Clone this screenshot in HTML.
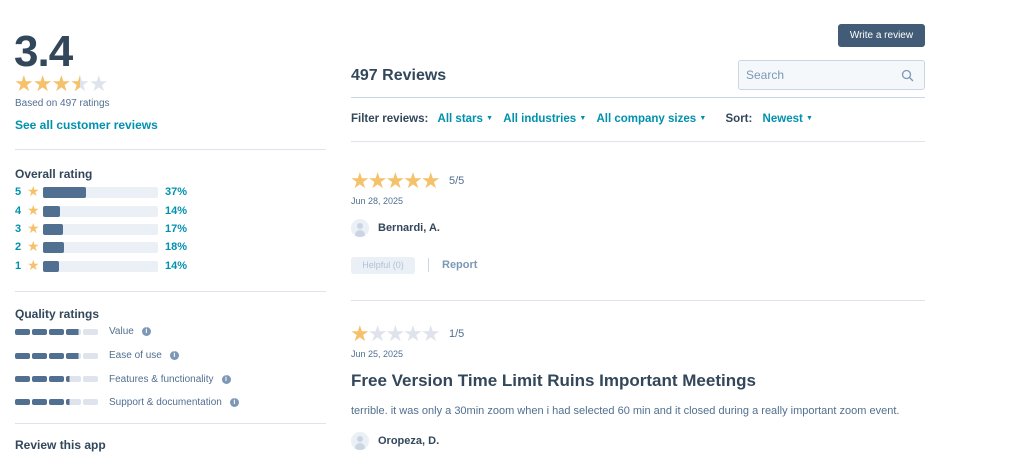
<!DOCTYPE html>
<html><head><meta charset="utf-8"><style>
*{margin:0;padding:0;box-sizing:border-box}
body{width:1024px;height:447px;overflow:hidden;background:#fff;font-family:"Liberation Sans",sans-serif;color:#33475b;position:relative}
.a{position:absolute;white-space:nowrap}
.b{font-weight:bold}
.t{color:#0091ae}
.hr{position:absolute;height:1px;background:#dfe3eb}
.st{color:#f5c26b}
.sg{color:#dfe3eb}
.bar{position:absolute;left:43px;width:115px;height:11px;background:#eaf0f6;border-radius:2px}
.bar i{display:block;height:11px;background:#516f90;border-radius:2px}
.q{position:absolute;left:15px;display:flex;gap:2px}
.q i{display:block;width:15px;height:6px;background:#dfe3eb;border-radius:2px}
.q i.f{background:#516f90}
.info{display:inline-block;width:9px;height:9px;border-radius:50%;background:#7c98b6;color:#fff;font-size:7px;text-align:center;line-height:9px;font-weight:bold;margin-left:8px;vertical-align:1px}
.av{position:absolute;width:18px;height:18px;border-radius:50%;background:#eaf0f6;overflow:hidden}
.av:before{content:"";position:absolute;left:6px;top:4px;width:6px;height:6px;border-radius:50%;background:#cbd6e2}
.av:after{content:"";position:absolute;left:4px;top:11px;width:10px;height:8px;border-radius:5px 5px 0 0;background:#cbd6e2}
.car{font-size:7px;vertical-align:2px}
</style></head><body>
<div class="a b" style="left:14px;top:27px;font-size:44px;letter-spacing:-1px">3.4</div>
<div class="a" style="left:14px;top:71px;font-size:22px;letter-spacing:-1px"><span class="st">★★★</span><span style="position:relative;color:#dfe3eb">★<span style="position:absolute;left:0;top:0;width:50%;overflow:hidden;color:#f5c26b">★</span></span><span class="sg">★</span></div>
<div class="a" style="left:15px;top:98px;font-size:10px;color:#516f90">Based on 497 ratings</div>
<div class="a b t" style="left:15px;top:118px;font-size:12px">See all customer reviews</div>
<div class="hr" style="left:15px;top:149px;width:311px"></div>
<div class="a b" style="left:15px;top:167px;font-size:12px">Overall rating</div>
<div class="a b t" style="left:15px;top:186px;font-size:11px">5</div><div class="a st" style="left:27px;top:183px;font-size:14px">★</div><div class="bar" style="top:187px"><i style="width:43px"></i></div><div class="a b t" style="left:165px;top:186px;font-size:11px">37%</div>
<div class="a b t" style="left:15px;top:205px;font-size:11px">4</div><div class="a st" style="left:27px;top:202px;font-size:14px">★</div><div class="bar" style="top:206px"><i style="width:17px"></i></div><div class="a b t" style="left:165px;top:205px;font-size:11px">14%</div>
<div class="a b t" style="left:15px;top:223px;font-size:11px">3</div><div class="a st" style="left:27px;top:220px;font-size:14px">★</div><div class="bar" style="top:224px"><i style="width:20px"></i></div><div class="a b t" style="left:165px;top:223px;font-size:11px">17%</div>
<div class="a b t" style="left:15px;top:241px;font-size:11px">2</div><div class="a st" style="left:27px;top:238px;font-size:14px">★</div><div class="bar" style="top:242px"><i style="width:21px"></i></div><div class="a b t" style="left:165px;top:241px;font-size:11px">18%</div>
<div class="a b t" style="left:15px;top:260px;font-size:11px">1</div><div class="a st" style="left:27px;top:257px;font-size:14px">★</div><div class="bar" style="top:261px"><i style="width:16px"></i></div><div class="a b t" style="left:165px;top:260px;font-size:11px">14%</div>
<div class="hr" style="left:15px;top:291px;width:311px"></div>
<div class="a b" style="left:15px;top:307px;font-size:12px">Quality ratings</div>
<div class="q" style="top:329px"><i class="f"></i><i class="f"></i><i class="f"></i><i class="f" style="background:linear-gradient(90deg,#516f90 85%,#dfe3eb 85%)"></i><i></i></div>
<div class="a" style="left:109px;top:326px;font-size:10px;color:#516f90">Value<span class="info">i</span></div>
<div class="q" style="top:353px"><i class="f"></i><i class="f"></i><i class="f"></i><i class="f" style="background:linear-gradient(90deg,#516f90 85%,#dfe3eb 85%)"></i><i></i></div>
<div class="a" style="left:109px;top:350px;font-size:10px;color:#516f90">Ease of use<span class="info">i</span></div>
<div class="q" style="top:376px"><i class="f"></i><i class="f"></i><i class="f"></i><i style="background:linear-gradient(90deg,#516f90 25%,#dfe3eb 25%)"></i><i></i></div>
<div class="a" style="left:109px;top:374px;font-size:10px;color:#516f90">Features &amp; functionality<span class="info">i</span></div>
<div class="q" style="top:399px"><i class="f"></i><i class="f"></i><i class="f"></i><i style="background:linear-gradient(90deg,#516f90 25%,#dfe3eb 25%)"></i><i></i></div>
<div class="a" style="left:109px;top:397px;font-size:10px;color:#516f90">Support &amp; documentation<span class="info">i</span></div>
<div class="hr" style="left:15px;top:423px;width:311px"></div>
<div class="a b" style="left:15px;top:438px;font-size:12px">Review this app</div>

<div class="a" style="left:838px;top:24px;width:87px;height:23px;background:#425b76;border-radius:3px;color:#fff;font-size:10px;text-align:center;line-height:23px">Write a review</div>
<div class="a b" style="left:351px;top:67px;font-size:16px">497 Reviews</div>
<div class="a" style="left:738px;top:60px;width:187px;height:30px;background:#f5f8fa;border:1px solid #cbd6e2;border-radius:3px"><span style="position:absolute;left:7px;top:7px;font-size:12px;color:#7c98b6">Search</span>
<svg style="position:absolute;left:162px;top:8px" width="13" height="13" viewBox="0 0 13 13"><circle cx="5.5" cy="5.5" r="4" fill="none" stroke="#7c98b6" stroke-width="1.3"/><path d="M8.5 8.5L12 12" stroke="#7c98b6" stroke-width="1.3"/></svg></div>
<div class="hr" style="left:351px;top:97px;width:574px;background:#cbd6e2"></div>
<div class="a" style="left:351px;top:113px;font-size:11.5px"><b>Filter reviews:</b>
<b class="t" style="margin-left:6px">All stars <span class="car">▼</span></b>
<b class="t" style="margin-left:7px">All industries <span class="car">▼</span></b>
<b class="t" style="margin-left:7px">All company sizes <span class="car">▼</span></b>
<b style="margin-left:16px">Sort:</b>
<b class="t" style="margin-left:7px">Newest <span class="car">▼</span></b></div>
<div class="hr" style="left:351px;top:141px;width:574px"></div>

<div class="a st" style="left:350px;top:168px;font-size:22px;letter-spacing:-2px">★★★★★</div>
<div class="a" style="left:449px;top:175px;font-size:11px;color:#516f90">5/5</div>
<div class="a" style="left:351px;top:196px;font-size:9px;color:#516f90">Jun 28, 2025</div>
<div class="av" style="left:351px;top:219px"></div>
<div class="a b" style="left:378px;top:222px;font-size:11px">Bernardi, A.</div>
<div class="a" style="left:351px;top:257px;width:64px;height:17px;background:#eaf0f6;border-radius:3px;font-size:9px;color:#b0c1d4;text-align:center;line-height:17px">Helpful (0)</div>
<div class="a" style="left:428px;top:258px;width:1px;height:14px;background:#cbd6e2"></div>
<div class="a b" style="left:442px;top:259px;font-size:11px;color:#7c98b6">Report</div>
<div class="hr" style="left:351px;top:300px;width:574px"></div>

<div class="a" style="left:350px;top:321px;font-size:22px;letter-spacing:-2px"><span class="st">★</span><span class="sg">★★★★</span></div>
<div class="a" style="left:449px;top:328px;font-size:11px;color:#516f90">1/5</div>
<div class="a" style="left:351px;top:349px;font-size:9px;color:#516f90">Jun 25, 2025</div>
<div class="a b" style="left:351px;top:371px;font-size:17px">Free Version Time Limit Ruins Important Meetings</div>
<div class="a" style="left:351px;top:405px;font-size:11px;color:#516f90">terrible. it was only a 30min zoom when i had selected 60 min and it closed during a really important zoom event.</div>
<div class="av" style="left:351px;top:432px"></div>
<div class="a b" style="left:378px;top:435px;font-size:11px">Oropeza, D.</div>
</body></html>
